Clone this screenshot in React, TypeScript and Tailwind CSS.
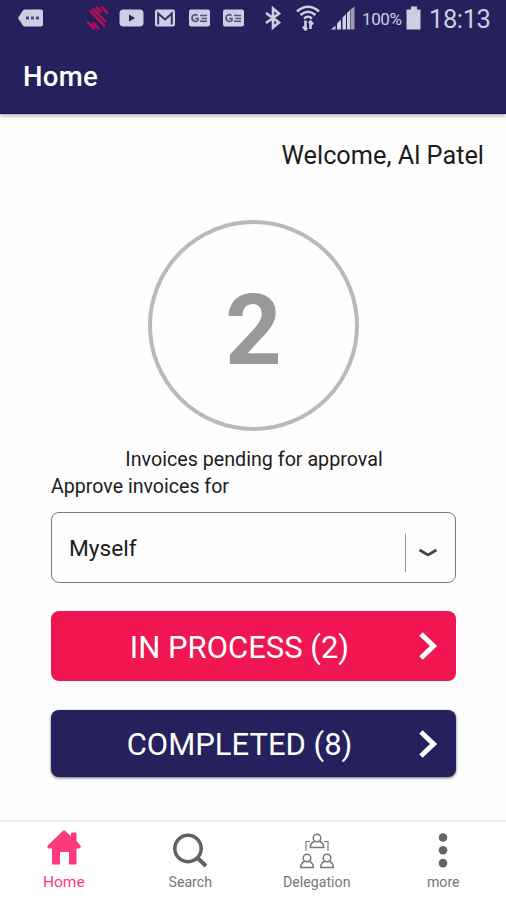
import type { ReactNode } from 'react'

type ActionButtonProps = {
  label: string
  className: string
}

type NavItemProps = {
  label: string
  icon: ReactNode
  active?: boolean
}

const StatusBar = () => (
  <div className="flex h-9 items-center text-[#cfcde4]">
    <svg className="ml-[18px] h-[18px] w-[25px]" viewBox="0 0 25 18">
      <path
        d="M7 .5h16a2 2 0 0 1 2 2v13a2 2 0 0 1-2 2H7Q5.500 17.500 4.500 16L0 9l4.500-7Q5.500.5 7 .5z"
        fill="currentColor"
      />
      <path d="M8 7.500h3v3H8zM13 7.500h3v3h-3zM18 7.500h3v3h-3z" fill="#4a4679" />
    </svg>

    <svg className="ml-[43px] h-6 w-[23px]" viewBox="0 0 23 24" fill="none">
      <path
        d="M2.500 6.500L16 21M1.500 11L9 19M13 6.500L21.500 15.500"
        stroke="#12215f"
        strokeWidth="2.600"
      />
      <path
        d="M4.500 5.500L18 19.500M7.500 3.500L19.500 15.500M11 2L14.500 5.500M16 1.500L21 6.500M2 16L8 22.500M7.500 17.500L12.500 22.500"
        stroke="#b00f55"
        strokeWidth="2.800"
        strokeLinecap="round"
      />
    </svg>

    <svg className="ml-[10px] h-[18px] w-[25px]" viewBox="0 0 25 18">
      <rect x=".5" y=".5" width="24" height="17" rx="4" fill="currentColor" />
      <path d="M10 5.500v7l6-3.500z" fill="#25215c" />
    </svg>

    <svg className="ml-[11px] h-[18px] w-5" viewBox="0 0 20 18" fill="none">
      <rect y=".5" width="20" height="17" rx="2" fill="currentColor" />
      <path d="M3.200 15.500V4.500L10 10.500l6.800-6v11" stroke="#343064" strokeWidth="2" />
    </svg>

    <NewsIcon className="ml-[14px] h-[18px] w-[21px]" />
    <NewsIcon className="ml-[13px] h-[18px] w-[21px]" />

    <svg
      className="ml-[21px] h-6 w-4"
      viewBox="0 0 16 24"
      fill="none"
      stroke="currentColor"
      strokeWidth="2.600"
    >
      <path d="M1 7l13 9.500L8 21.500v-19l6 5L1 17" />
    </svg>

    <svg
      className="ml-[15px] h-[26px] w-6"
      viewBox="0 0 24 26"
      fill="none"
      stroke="currentColor"
    >
      <path
        d="M1 6.500Q12-3 23 6.500M4.500 10Q12 3.500 19.500 10M8 13.500q4-3.500 8 0"
        strokeWidth="2.400"
      />
      <path
        d="M9.500 15.500v9M7 21.500l2.500 3 1.500-2M14.500 24v-8M13 18.500l1.500-2 2.500 3"
        strokeWidth="2.600"
      />
    </svg>

    <svg className="ml-[11px] h-6 w-6" viewBox="0 0 24 24" fill="currentColor">
      <path d="M0 23.500l4.500-4v4zM6 23.500v-6l4-4v10z" />
      <path d="M11.500 23.500v-12l3.500-3.500v15.500zM16 23.500V7l3-3v19.500z" />
      <path d="M19.500 23.500V3.500L23.500.5v23z" fill="#9f9cba" />
    </svg>

    <span className="ml-[7px] w-10 pt-[3px] text-[17px] leading-none tracking-[-0.400px] whitespace-nowrap">
      100%
    </span>
    <svg className="ml-[4px] h-6 w-4" viewBox="0 0 16 24" fill="currentColor">
      <path d="M5 .5h6v3h3.500v20h-14v-20H5z" />
    </svg>
    <span className="ml-[7px] pt-[4px] text-[25.500px] leading-none tracking-[-0.400px]">
      18:13
    </span>
  </div>
)

const NewsIcon = ({ className }: { className: string }) => (
  <svg className={className} viewBox="0 0 21 18" fill="none">
    <rect y=".5" width="21" height="17" rx="2" fill="currentColor" />
    <path
      d="M8.500 6.500Q5.500 4.500 3.500 7q-1.500 3 1 5 3 1 4.500-.5V9.500H6M11 6.500h7M12.500 9.500h5.500M11 12.200h7"
      stroke="#55517f"
      strokeWidth="1.600"
    />
  </svg>
)

const ActionButton = ({ label, className }: ActionButtonProps) => (
  <button
    type="button"
    className={`flex items-center rounded-lg text-[31px] text-white ${className}`}
  >
    <span className="flex-1 pt-[4px] pl-[9px] text-center whitespace-nowrap">
      {label}
    </span>
    <svg
      className="mr-[18px] h-7 w-[19px]"
      viewBox="0 0 19 28"
      fill="none"
      stroke="currentColor"
      strokeWidth="5"
    >
      <path d="M2 2l12.500 12L2 26" />
    </svg>
  </button>
)

const NavItem = ({ label, icon, active }: NavItemProps) => (
  <a
    className={`flex flex-1 flex-col items-center pt-[7px] pl-px leading-5 ${
      active ? 'text-[15.500px] text-[#fb3b7b]' : 'text-[14.200px] text-[#777]'
    }`}
  >
    <span className="flex h-[43px] items-center justify-center">{icon}</span>
    {label}
  </a>
)

const HomeIcon = () => (
  <svg
    className="mb-[6px] h-[35px] w-[34px]"
    viewBox="0 0 34 35"
    fill="currentColor"
  >
    <path d="M15.500 1.200Q17-.5 18.500 1.200L24 6V3.500Q24 2.500 25 2.500h3.500q1 0 1 1V11l4 4.500q1 2.500-1.500 3H29.500v15q0 1-1 1H22V23q0-1-1-1h-7q-1 0-1 1v11.500H6q-1 0-1-1v-15H2Q-.5 18 .8 15.500z" />
  </svg>
)

const SearchIcon = () => (
  <svg
    className="mb-px h-[35px] w-[35px]"
    viewBox="0 0 35 35"
    fill="none"
    stroke="#616161"
  >
    <circle cx="15" cy="15.500" r="13.200" strokeWidth="3.500" />
    <path d="M24 24.500L33 33" strokeWidth="4" />
  </svg>
)

const DelegationIcon = () => (
  <svg
    className="h-[36px] w-[34px]"
    viewBox="0 0 34 36"
    fill="none"
    stroke="#777"
    strokeWidth="1.500"
  >
    <path d="M10 8.500H6V18M24 8.500h4V18" strokeWidth="1.100" />
    <circle cx="17" cy="5" r="3.800" />
    <path d="M14.500 8.500Q10.500 9.500 10.200 14.500h13.600Q23.500 9.500 19.500 8.500" />
    <circle cx="7" cy="25" r="3.800" />
    <path d="M4.500 28.500Q1 29.500.7 34.500h12.600Q13 29.500 9.500 28.500" />
    <circle cx="27" cy="25" r="3.800" />
    <path d="M24.500 28.500Q21 29.500 20.700 34.500h12.600Q33 29.500 29.500 28.500" />
  </svg>
)

const MoreIcon = () => (
  <svg className="h-[35px] w-[10px]" viewBox="0 0 10 35" fill="#646464">
    <circle cx="5" cy="4.500" r="4.300" />
    <circle cx="5" cy="17.300" r="4.300" />
    <circle cx="5" cy="30.100" r="4.300" />
  </svg>
)

export default function App() {
  return (
    <div className="flex h-[900px] w-[506px] flex-col overflow-hidden bg-[#fefefe] font-[Roboto,sans-serif] text-[#1c1c1c]">
      <header className="h-[114px] border-b border-[#17134f] bg-[#25215c] shadow-[0_2px_4px_rgba(0,0,0,0.3)]">
        <StatusBar />
        <h1 className="pt-[23px] pl-[23px] text-[27.500px] leading-9 font-medium tracking-[0.300px] text-white">
          Home
        </h1>
      </header>

      <main className="flex flex-1 flex-col pr-[50px] pl-[51px]">
        <p className="mt-[26px] -mr-[28px] text-right text-[25.300px] leading-8">
          Welcome, Al Patel
        </p>
        <div className="mt-[48px] flex size-[211px] items-center justify-center self-center rounded-full border-4 border-[#b9b9b9] pt-[9px] text-[99px] leading-none font-bold text-[#999]">
          2
        </div>
        <p className="mt-[15px] pl-px text-center text-[19.700px] leading-[27px]">
          Invoices pending for approval
        </p>
        <p className="text-[19.600px] leading-[27px]">Approve invoices for</p>

        <div className="mt-[12px] flex h-[71px] items-center rounded-lg border-[1.500px] border-[#777] pl-[17px]">
          <span className="flex-1 pt-[4px] text-[22.700px]">Myself</span>
          <span className="mt-[10px] h-[38px] w-px bg-[#999]" />
          <svg
            className="mt-[10px] mr-[17px] ml-[12px] h-[10px] w-5"
            viewBox="0 0 20 10"
            fill="none"
            stroke="#444"
            strokeWidth="2.800"
          >
            <path d="M1.500 2L10 7l8.500-5" />
          </svg>
        </div>

        <ActionButton
          label="IN PROCESS (2)"
          className="mt-[28px] h-[70px] bg-[#ef1651]"
        />
        <ActionButton
          label="COMPLETED (8)"
          className="mt-[29px] h-[67px] bg-[#25215c] shadow-[0_1px_3px_rgba(0,0,0,0.6)]"
        />
      </main>

      <nav className="flex h-[80px] border-t-2 border-[#ececec] bg-white">
        <NavItem label="Home" icon={<HomeIcon />} active />
        <NavItem label="Search" icon={<SearchIcon />} />
        <NavItem label="Delegation" icon={<DelegationIcon />} />
        <NavItem label="more" icon={<MoreIcon />} />
      </nav>
    </div>
  )
}
